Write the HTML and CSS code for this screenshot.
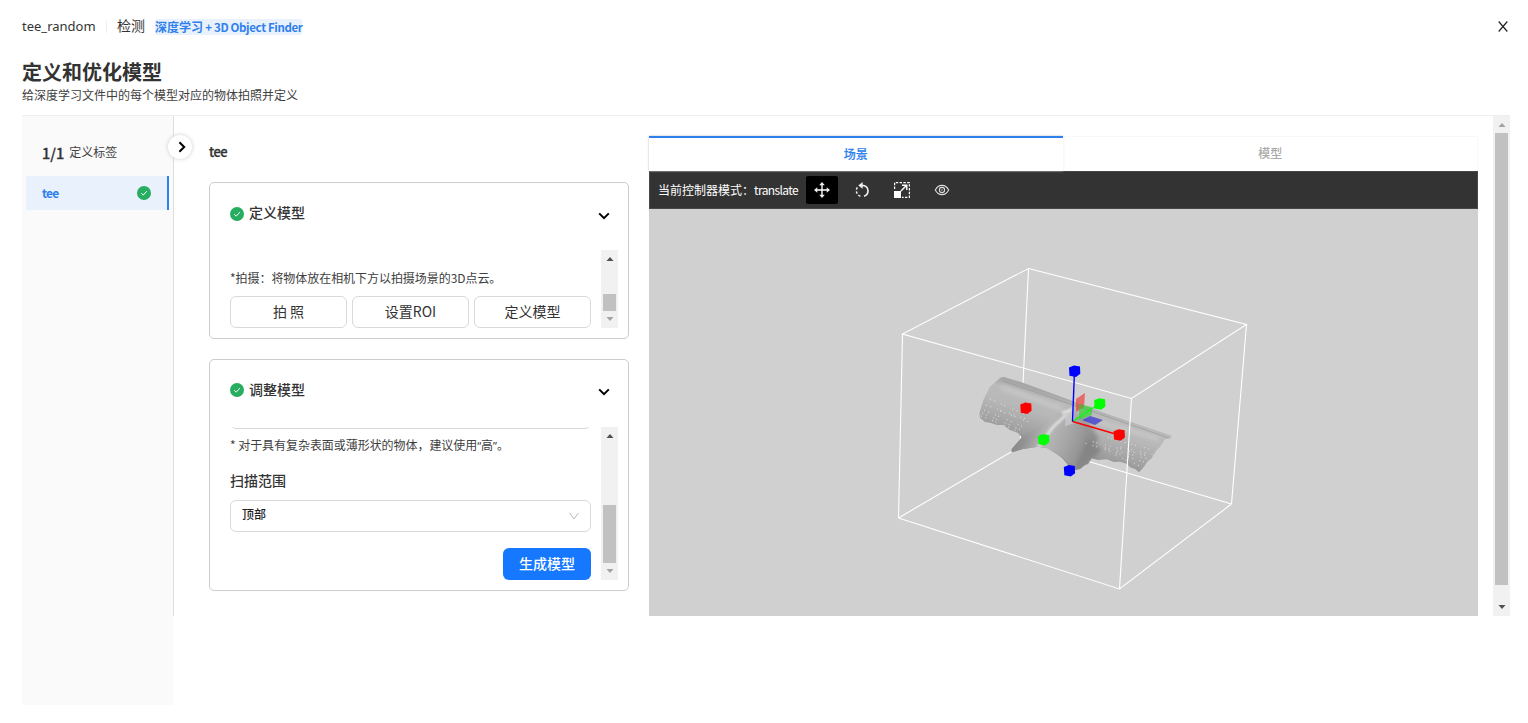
FILE: index.html
```html
<!DOCTYPE html>
<html lang="zh-CN">
<head>
<meta charset="utf-8">
<title>定义和优化模型</title>
<link rel="stylesheet" href="styles.css">
</head>
<body>
<svg class="defs" width="0" height="0">
  <symbol id="ok" viewBox="0 0 14 14"><circle cx="7" cy="7" r="7" fill="#27ae60"/><path d="M4.2 7.2l2 2 3.6-4" fill="none" stroke="#fff" stroke-width="1"/></symbol>
  <symbol id="down" viewBox="0 0 12 8"><path d="M1.2 1.4L6 6.2l4.8-4.8" fill="none" stroke="#000" stroke-width="2"/></symbol>
  <symbol id="tri-up" viewBox="0 0 7 4"><path d="M0 4L3.5 0 7 4z" fill="currentColor"/></symbol>
  <symbol id="tri-down" viewBox="0 0 7 4"><path d="M0 0h7L3.5 4z" fill="currentColor"/></symbol>
</svg>
<header class="top">
  <span class="project">tee_random</span>
  <i class="divider"></i>
  <span class="step">检测</span>
  <span class="tag">深度学习<span class="latin"> + 3D Object Finder</span></span>
  <svg class="close" viewBox="0 0 10 11"><path d="M.7.5l8.6 10M9.3.5L.7 10.5" fill="none" stroke="#222" stroke-width="1.2"/></svg>
</header>
<section class="heading">
  <h1>定义和优化模型</h1>
  <p>给深度学习文件中的每个模型对应的物体拍照并定义</p>
</section>
<main class="body">
  <aside class="side">
    <div class="count"><b>1/1</b><span>定义标签</span></div>
    <div class="label"><span>tee</span><svg class="ok"><use href="#ok"/></svg></div>
  </aside>
  <div class="content">
    <button class="toggle"><svg viewBox="0 0 8 12"><path d="M1.4 1.2L6.2 6l-4.8 4.8" fill="none" stroke="#000" stroke-width="2"/></svg></button>
    <div class="forms">
      <h2>tee</h2>
      <section class="card define">
        <div class="card-head"><svg class="ok"><use href="#ok"/></svg><h3>定义模型</h3><svg class="chev"><use href="#down"/></svg></div>
        <div class="scroll-row">
          <div class="pane">
            <p class="hint">*拍摄：将物体放在相机下方以拍摄场景的3D点云。</p>
            <div class="buttons"><button class="btn">拍 照</button><button class="btn">设置ROI</button><button class="btn">定义模型</button></div>
          </div>
          <div class="bar"><svg class="arrow dark"><use href="#tri-up"/></svg><i class="thumb"></i><svg class="arrow"><use href="#tri-down"/></svg></div>
        </div>
      </section>
      <section class="card adjust">
        <div class="card-head"><svg class="ok"><use href="#ok"/></svg><h3>调整模型</h3><svg class="chev"><use href="#down"/></svg></div>
        <div class="scroll-row">
          <div class="pane">
            <div class="clip"><div class="select"></div></div>
            <p class="hint">* 对于具有复杂表面或薄形状的物体，建议使用<span class="quote">“</span>高<span class="quote">”</span>。</p>
            <h4>扫描范围</h4>
            <div class="select"><span>顶部</span><svg viewBox="0 0 10 8"><path d="M.5.8L5 7 9.5.8" fill="none" stroke="#b8b8b8"/></svg></div>
            <button class="primary">生成模型</button>
          </div>
          <div class="bar"><svg class="arrow dark"><use href="#tri-up"/></svg><i class="thumb"></i><svg class="arrow"><use href="#tri-down"/></svg></div>
        </div>
      </section>
    </div>
    <section class="viewer">
      <div class="tabs"><div class="tab active">场景</div><div class="tab">模型</div></div>
      <div class="tools">
        <span>当前控制器模式：<span class="mode">translate</span></span>
        <button class="tool on"><svg viewBox="0 0 16 16"><path d="M8 2v12M2 8h12" stroke="#fff" stroke-width="1.4"/><path d="M8 0l2.8 3.3H5.2zM8 16l2.8-3.3H5.2zM0 8l3.3-2.8v5.6zM16 8l-3.3-2.8v5.6z" fill="#eee"/></svg></button>
        <button class="tool"><svg viewBox="0 0 16 16"><path d="M8 3.3c3.6 0 6 2.4 6 5.5 0 2.6-1.6 4.7-4 5.4" fill="none" stroke="#eee" stroke-width="1.7"/><path d="M4.3 3.4L8.6 0v6.8z" fill="#eee"/><path d="M3.3 5.4A6 6 0 0 0 8 14.6" fill="none" stroke="#eee" stroke-width="1.5" stroke-dasharray="2.4 1.7"/></svg></button>
        <button class="tool"><svg viewBox="0 0 16 16"><path d="M.6 7V.6h14.8v14.8H8" fill="none" stroke="#fff" stroke-width="1.2" stroke-dasharray="2.4 1.4"/><path d="M0 9h7v7H0z" fill="#fff"/><path d="M7 9l5.4-5.4M8 3.2h4.8V8" fill="none" stroke="#fff" stroke-width="1.4"/></svg></button>
        <button class="tool"><svg viewBox="0 0 16 16"><path d="M1.3 8C4.5 1.8 11.5 1.8 14.7 8 11.5 14.2 4.5 14.2 1.3 8z" fill="none" stroke="#ddd" stroke-width="1.1"/><circle cx="8" cy="8" r="2.6" fill="none" stroke="#ddd" stroke-width="1.1"/><circle cx="8" cy="8" r=".7" fill="#ddd"/></svg></button>
      </div>
      <svg class="scene" viewBox="649 209 829 407">
        <defs>
          <linearGradient id="tube" gradientUnits="userSpaceOnUse" x1="1080" y1="402" x2="1060" y2="470"><stop offset="0" stop-color="#a6a6a6"/><stop offset=".1" stop-color="#bababa"/><stop offset=".3" stop-color="#b8b8b8"/><stop offset=".6" stop-color="#a2a2a2"/><stop offset="1" stop-color="#7c7c7c"/></linearGradient>
          <linearGradient id="branch" gradientUnits="userSpaceOnUse" x1="1025" y1="432" x2="1090" y2="458"><stop offset="0" stop-color="#8c8c8c"/><stop offset=".3" stop-color="#b8b8b8"/><stop offset=".6" stop-color="#a6a6a6"/><stop offset="1" stop-color="#868686"/></linearGradient>
          <filter id="soft" x="-30%" y="-30%" width="160%" height="160%"><feGaussianBlur stdDeviation="2"/></filter>
          <filter id="glow" x="-30%" y="-30%" width="160%" height="160%"><feGaussianBlur stdDeviation=".8"/></filter>
          <clipPath id="part"><path d="M1000 378L1003.3 376.7 1023 382.7 1070 400 1088 407 1110 415 1133 422.7 1160 431.7 1171.7 435.7 1170.7 438.3 1165 439.3 1160 446.7 1156 451 1151.7 458.3 1148 461 1143 468 1139 472.3 1135 469 1130 467.3 1127 464 1120 461.7 1114 462 1106.7 459.3 1098 460 1091.7 458.3 1088 464 1085 465 1080 469 1075 470 1068 465 1062 458 1056.7 454 1047 448 1038 446.7 1023 449 1011.7 452.3 1011.7 449 1016.7 443.3 1021.7 437.3 1018 433 1015 431.7 1010 430 1003 425 997 425 990 422.7 985 422 980 417.7 979.5 413 983.3 400 990 386.7z"/></clipPath>
          <path id="cube" d="M-5.5-3.7L-.5-5.8 5.5-4.8 5.8 2.5 1.5 5.8-5 4.5z"/>
        </defs>
        <path class="wire" d="M1028.5 268.5L1246.5 324.5 1131.5 398.5 902.5 334zM1028.5 268.5L1020 446M902.5 334L898.5 518M1246.5 324.5L1231.5 504M898.5 518L1119.5 589 1231.5 504M898.5 518L1021 446M1231.5 504L1087 461"/>
        <g clip-path="url(#part)">
          <path fill="url(#tube)" d="M970 370h210v110H970z"/>
          <g filter="url(#soft)">
            <path fill="url(#branch)" d="M1068 408L1044 426 1010 445 1009 454 1057 456 1076 472 1092 458 1098 438 1088 421z"/>
            <path d="M1086 438L1102 450 1089 462 1073 470 1082 452z" fill="#858585"/>
            <path d="M1001 387L1062 409M1099 422L1159 439" stroke="#c9c9c9" stroke-width="4"/>
          </g>
          <path d="M1003 381L1169 438" stroke="#9a9a9a" stroke-width=".7"/>
          <g filter="url(#glow)" fill="none" stroke="#e2e2e2">
            <path d="M1062 413l9-3" stroke-width="3"/>
            <path d="M1066 415l-13 12-8 11-7 9" stroke-width="2.6"/>
          </g>
          <g class="specks">
            <path d="M990 399l34 15M986 405l40 14M984 410l40 17M982 413l44 19M981 416l37 15M1000 411l29 11"/>
            <path stroke-dashoffset="9" d="M1090 441l62 16M1105 437l48 13M1102 447l46 12"/>
            <path stroke-dashoffset="4" d="M1085 443l62 20M1115 455l29 13M1120 447l34 8"/>
          </g>
          <path d="M1066 411l7-5 2 17-10 3z" fill="#ddd" opacity=".5"/>
        </g>
        <path class="wire" d="M1131.5 398.5L1119.5 589"/>
        <path d="M1076 399l9-6-1 14-8 5z" fill="#f03434" opacity=".65"/>
        <path d="M1079 404l13 3v8l-13 5z" fill="#18d918" opacity=".55"/>
        <path d="M1082 420l8-4 13 4-8 5z" fill="#2727d8" opacity=".65"/>
        <path d="M1072.5 421.5L1099 404" stroke="#0f0" stroke-width="1.4"/>
        <path d="M1072.5 421.5L1119 435" stroke="red" stroke-width="1.4"/>
        <path d="M1072.5 421.5L1074.5 371" stroke="#00f" stroke-width="1.4"/>
        <g fill="#00f"><use href="#cube" x="1074.5" y="371.3"/><use href="#cube" x="1069.3" y="470.8"/></g>
        <g fill="#0f0"><use href="#cube" x="1099.6" y="404"/><use href="#cube" x="1043.5" y="439.7"/></g>
        <g fill="red"><use href="#cube" x="1025.8" y="408.2"/><use href="#cube" x="1119.1" y="435"/></g>
      </svg>
    </section>
  </div>
  <div class="bar page-bar"><svg class="arrow"><use href="#tri-up"/></svg><i class="thumb"></i><svg class="arrow dark"><use href="#tri-down"/></svg></div>
</main>
</body>
</html>
```

FILE: styles.css
```css
* { box-sizing: border-box; }
body { margin: 0; height: 723px; overflow: hidden; background: #fff; color: #333; font: 14px/20px "Noto Sans CJK SC", sans-serif; }
h1, h2, h3, h4, p { margin: 0; }
button { padding: 0; border: 0; font: inherit; color: inherit; }
svg { display: block; flex: none; }
.defs { position: absolute; }

.top { height: 53px; padding: 0 20px 0 22px; display: flex; align-items: center; }
.project { width: 74px; padding-bottom: 2px; font-family: "Noto Sans", sans-serif; font-size: 13px; }
.divider { width: 1px; height: 12px; margin: 0 10px; background: #eee; }
.step { width: 28px; margin: 0 10px 0 0; padding-bottom: 3px; }
.tag { width: 147px; height: 16px; line-height: 15px; background: #e9f1fd; color: #2f80ed; font-size: 12px; font-weight: 700; white-space: nowrap; border-radius: 2px; }
.tag .latin { font-size: 11.5px; letter-spacing: -.35px; }
.close { width: 10px; height: 11px; margin-left: auto; }

.heading { height: 62px; padding: 5px 22px 0; }
.heading h1 { font-size: 20px; line-height: 28px; font-weight: 700; }
.heading p { font-size: 12px; line-height: 18px; color: #404040; }

.body { height: 501px; margin: 0 18px 0 22px; border-top: 1px solid #eee; display: flex; align-items: flex-start; }
.side { width: 151px; height: 589px; background: #fafafa; flex: none; padding: 26px 4px 0; }
.count { height: 20px; padding-left: 16px; display: flex; gap: 5px; }
.count b { font-weight: 500; font-size: 14.5px; line-height: 21px; -webkit-text-stroke: .3px #333; }
.count span { font-size: 12px; line-height: 19px; color: #404040; }
.label { height: 34px; margin-top: 14px; padding: 0 16px; display: flex; align-items: center; justify-content: space-between; background: #e9f1fd; border-right: 2px solid #2f80ed; color: #2f80ed; font-size: 12px; font-weight: 700; }
.label span { letter-spacing: -.8px; }
.ok { width: 14px; height: 14px; }

.content { position: relative; width: 1320px; height: 500px; padding: 20px 15px 0 35px; display: flex; gap: 20px; border-left: 1px solid #dedede; }
.toggle { position: absolute; left: -6px; top: 19px; width: 24px; height: 24px; border-radius: 50%; background: #fff; box-shadow: 0 0 4px #ccc; display: grid; place-items: center; }
.toggle svg { width: 8px; height: 12px; margin-left: 4px; }
.forms { width: 420px; flex: none; }
.forms h2 { height: 46px; line-height: 31px; font-size: 13px; font-weight: 500; letter-spacing: -.5px; -webkit-text-stroke: .3px #333; }
.card { border: 1px solid #ccc; border-radius: 5px; padding: 20px 10px 10px 20px; }
.define { height: 157px; margin-bottom: 20px; }
.adjust { height: 232px; }
.card-head { height: 22px; margin-right: 8px; display: flex; align-items: center; }
.card-head h3 { margin-left: 5px; padding-bottom: 3px; font-size: 14px; font-weight: 500; }
.define h3 { padding-bottom: 4px; }
.adjust .card-head { height: 20px; }
.chev { width: 12px; height: 8px; margin: 4px 0 0 auto; }
.scroll-row { display: flex; justify-content: space-between; }
.define .scroll-row { height: 78px; margin-top: 25px; }
.adjust .scroll-row { height: 153px; margin-top: 27px; }
.pane { width: 361px; overflow: hidden; }
.hint { font-size: 12px; line-height: 20px; white-space: nowrap; letter-spacing: -.05px; color: #404040; }
.quote { font-family: "Noto Sans", sans-serif; font-size: 11px; letter-spacing: -.1px; }
.define .hint { margin-top: 18px; }
.buttons { display: flex; gap: 5px; margin-top: 8px; }
.btn { flex: 1; height: 32px; padding-bottom: 2px; background: #fff; border: 1px solid #d9d9d9; border-radius: 6px; }
.clip { height: 2px; overflow: hidden; display: flex; align-items: flex-end; }
.clip .select { width: 100%; flex: none; }
.adjust .hint { margin-top: 6px; height: 20px; }
.adjust h4 { margin-top: 15px; font-size: 14px; font-weight: 500; }
.select { height: 32px; border: 1px solid #d9d9d9; border-radius: 6px; padding: 0 11px 2px; display: flex; align-items: center; justify-content: space-between; color: #1f1f1f; font-size: 12px; font-weight: 500; }
.select span { padding-bottom: 2px; }
.adjust h4 + .select { margin-top: 10px; }
.select svg { width: 10px; height: 8px; margin-top: 2px; }
.primary { display: block; margin: 16px 0 0 auto; padding-bottom: 2px; width: 88px; height: 32px; border-radius: 6px; background: #1677ff; color: #fff; font-weight: 500; }

.bar { width: 17px; padding: 7px 2px; background: #f1f1f1; display: flex; flex-direction: column; align-items: center; flex: none; }
.arrow { width: 8px; height: 4px; color: #a3a3a3; }
.arrow.dark { color: #505050; }
.arrow:last-child { margin-top: auto; }
.thumb { width: 13px; background: #c1c1c1; }
.define .thumb { height: 17px; margin-top: 33px; }
.adjust .thumb { height: 58px; margin-top: 67px; }
.page-bar { height: 500px; }
.page-bar .thumb { height: 452px; margin-top: 6px; }

.viewer { width: 829px; height: 480px; flex: none; }
.tabs { display: flex; height: 35px; }
.tab { flex: 1; display: grid; place-items: center; padding-bottom: 2px; font-size: 12px; color: #aaa; font-weight: 500; border: 1px solid #f8f8f8; border-bottom: 0; }
.tab.active { color: #2f80ed; border: 0; border-top: 2px solid #2f80ed; box-shadow: 0 0 2px #bbb; -webkit-text-stroke: .2px #2f80ed; }
.tools { height: 38px; padding-left: 8px; background: #333; border: 1px solid #484848; display: flex; align-items: center; color: #fff; font-size: 12px; }
.tools > span { width: 148px; white-space: nowrap; }
.mode { letter-spacing: -.6px; }
.tool { width: 32px; height: 28px; margin-right: 8px; background: none; display: grid; place-items: center; border-radius: 2px; }
.tool.on { background: #000; }
.tool svg { width: 16px; height: 16px; }
.scene { width: 829px; height: 407px; background: #d0d0d0; }
.wire { fill: none; stroke: #fff; stroke-width: 1.1; }
.specks { fill: none; stroke: #e4e4e4; stroke-width: 1; stroke-dasharray: 1 3.6 1 6.3 1 2.7 1 8; }
```
